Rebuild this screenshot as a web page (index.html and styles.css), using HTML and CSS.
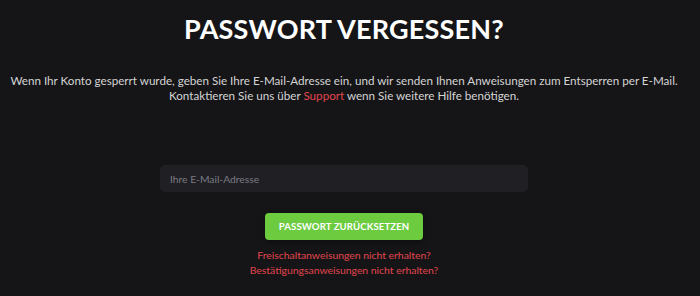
FILE: index.html
```html
<!DOCTYPE html>
<html lang="de">
<head>
<meta charset="utf-8">
<title>Passwort vergessen?</title>
<link rel="stylesheet" href="styles.css">
</head>
<body>
<main class="page">
  <h1 class="title">PASSWORT VERGESSEN?</h1>
  <p class="intro">Wenn Ihr Konto gesperrt wurde, geben Sie Ihre E-Mail-Adresse ein, und wir senden Ihnen Anweisungen zum Entsperren per E-Mail.<br>Kontaktieren Sie uns über <a class="link" href="#">Support</a> wenn Sie weitere Hilfe benötigen.</p>
  <form class="form">
    <input class="field" type="email" placeholder="Ihre E-Mail-Adresse">
    <button class="btn" type="button">PASSWORT ZURÜCKSETZEN</button>
  </form>
  <div class="links">
    <a class="link" href="#">Freischaltanweisungen nicht erhalten?</a>
    <a class="link" href="#">Bestätigungsanweisungen nicht erhalten?</a>
  </div>
</main>
</body>
</html>
```
FILE: styles.css
```css
html, body {
  margin: 0;
  padding: 0;
  background: #151518;
  height: 100%;
  overflow: hidden;
}
body {
  font-family: Lato, "Noto Sans", sans-serif;
  color: #d6d6d6;
}
.page {
  width: 688px;
  display: flex;
  flex-direction: column;
  align-items: center;
  padding-top: 13px;
}
.title {
  margin: 0;
  font-size: 27px;
  font-weight: 700;
  color: #ffffff;
  letter-spacing: 0.2px;
  line-height: 32px;
}
.intro {
  margin: 28px 0 0;
  font-size: 11.65px;
  line-height: 15px;
  text-align: center;
  white-space: nowrap;
  color: #d4d4d4;
}
.link {
  color: #e2464d;
  text-decoration: none;
}
.form {
  display: flex;
  flex-direction: column;
  align-items: center;
  margin-top: 62px;
}
.field {
  width: 368px;
  height: 27px;
  box-sizing: border-box;
  border: none;
  border-radius: 5px;
  background: #1f1f24;
  padding: 0 10px;
  font-family: inherit;
  font-size: 10.3px;
  color: #ddd;
  outline: none;
}
.field::placeholder {
  color: #7b7b82;
}
.btn {
  margin-top: 21px;
  width: 158px;
  height: 27px;
  border: none;
  border-radius: 4px;
  background: #6ccb3f;
  color: #ffffff;
  font-family: inherit;
  font-weight: 700;
  font-size: 9.6px;
  letter-spacing: 0.1px;
  box-shadow: 0 2px 6px rgba(0,0,0,0.4);
}
.links {
  display: flex;
  flex-direction: column;
  align-items: center;
  margin-top: 8px;
  font-size: 10.4px;
  line-height: 15px;
}
```
